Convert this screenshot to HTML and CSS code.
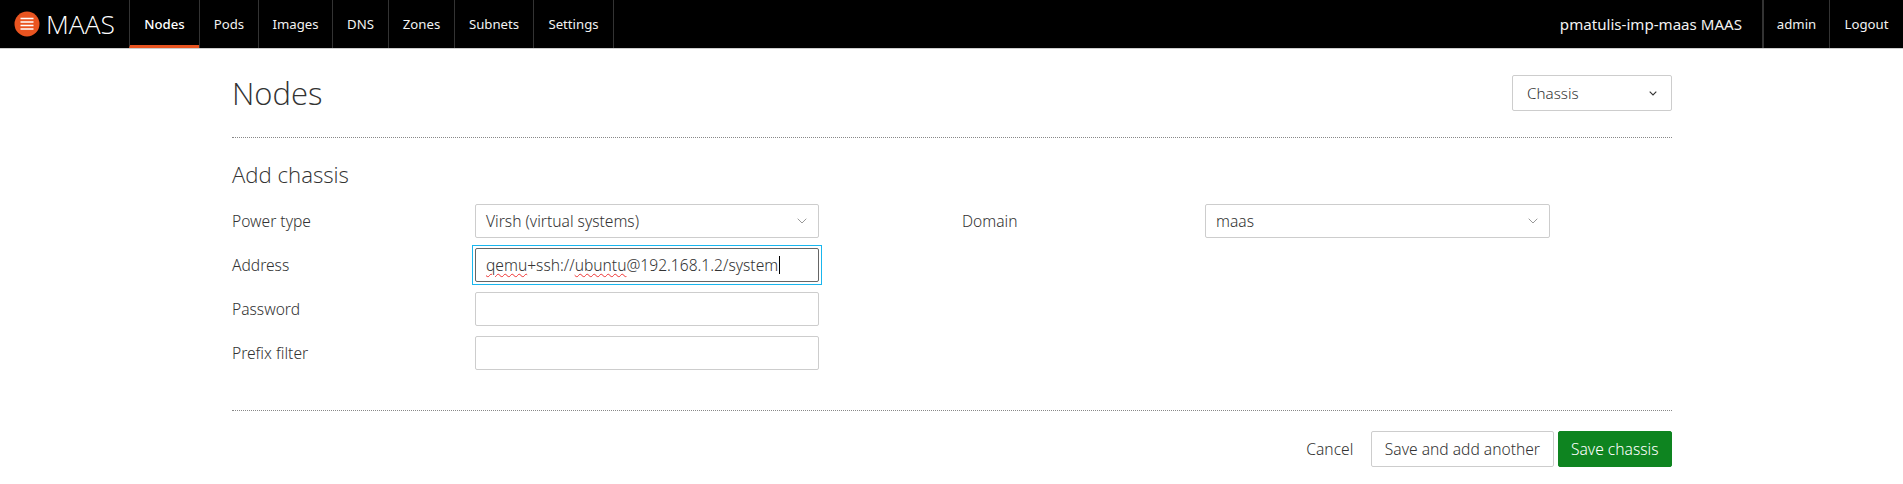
FILE: index.html
```html
<!DOCTYPE html>
<html lang="en">
<head>
<meta charset="utf-8">
<title>Nodes | MAAS</title>
<link rel="stylesheet" href="styles.css">
</head>
<body>
<header class="nav">
  <a class="brand">
    <svg class="logo" viewBox="0 0 26 26" width="26" height="26" aria-hidden="true">
      <circle cx="13" cy="13" r="12.5" fill="#e95420"/>
      <path d="M6.5 7.5h13M6.5 11h13M6.5 14.5h13M6.5 18h13" stroke="#fff" stroke-width="1.7" fill="none"/>
    </svg>
    <span class="brand-name">MAAS</span>
  </a>
  <nav class="tabs">
    <a class="tab tab-active">Nodes</a>
    <a class="tab">Pods</a>
    <a class="tab">Images</a>
    <a class="tab">DNS</a>
    <a class="tab">Zones</a>
    <a class="tab">Subnets</a>
    <a class="tab">Settings</a>
  </nav>
  <div class="nav-right">
    <span class="site">pmatulis-imp-maas MAAS</span>
    <a class="tab tab-user">admin</a>
    <a class="tab tab-logout">Logout</a>
  </div>
</header>
<main class="page">
  <div class="title-row">
    <h1 class="title">Nodes</h1>
    <div class="select select-add">Chassis<svg class="chev chev-dark" viewBox="0 0 8 5" width="8" height="5"><path d="M.7.7 4 4l3.3-3.3" fill="none" stroke="#333" stroke-width="1.1"/></svg></div>
  </div>
  <section class="panel">
    <h2 class="subtitle">Add chassis</h2>
    <div class="form">
      <div class="col col-left">
        <div class="row"><label class="label">Power type</label>
          <div class="select field">Virsh (virtual systems)<svg class="chev" viewBox="0 0 10 6" width="10" height="6"><path d="M.7.7 5 5 9.3.7" fill="none" stroke="#999" stroke-width="1"/></svg></div></div>
        <div class="row"><label class="label">Address</label>
          <div class="focus-ring"><div class="input input-focus"><span class="misspelt">qemu</span>+ssh://<span class="misspelt">ubuntu</span>@192.168.1.2/system<span class="caret"></span></div></div></div>
        <div class="row"><label class="label">Password</label><div class="input field"></div></div>
        <div class="row"><label class="label">Prefix filter</label><div class="input field"></div></div>
      </div>
      <div class="col col-right">
        <div class="row"><label class="label">Domain</label>
          <div class="select field field-domain">maas<svg class="chev" viewBox="0 0 10 6" width="10" height="6"><path d="M.7.7 5 5 9.3.7" fill="none" stroke="#999" stroke-width="1"/></svg></div></div>
      </div>
    </div>
    <div class="actions">
      <a class="cancel">Cancel</a>
      <button class="btn">Save and add another</button>
      <button class="btn btn-go">Save chassis</button>
    </div>
  </section>
</main>
</body>
</html>
```
FILE: styles.css
```css
* { box-sizing: border-box; }
html, body { margin: 0; padding: 0; }
body {
  background: #fff;
  color: #333;
  font-family: "Noto Sans", "Open Sans", sans-serif;
  font-size: 15.6px;
  font-weight: 300;
  line-height: 20px;
}
.nav {
  display: flex;
  align-items: stretch;
  height: 49px;
  background: #000;
  border-bottom: 1px solid #cdcdcd;
  color: #fff;
}
.brand {
  display: flex;
  align-items: center;
  width: 129px;
  padding-left: 14px;
}
.logo { flex: none; }
.brand-name {
  margin-left: 6px;
  font-size: 26.4px;
  font-weight: 300;
  font-family: "Open Sans", sans-serif;
}
.tabs { display: flex; }
.tab {
  display: flex;
  align-items: center;
  justify-content: center;
  font-size: 13.2px;
  font-weight: 400;
  border-left: 1px solid #333;
  color: #f2f2f2;
}
.tabs .tab:nth-child(1) { width: 70px; }
.tabs .tab:nth-child(2) { width: 59px; }
.tabs .tab:nth-child(3) { width: 74px; }
.tabs .tab:nth-child(4) { width: 56px; }
.tabs .tab:nth-child(5) { width: 66px; }
.tabs .tab:nth-child(6) { width: 79px; }
.tabs .tab:nth-child(7) { width: 81px; border-right: 1px solid #333; }
.tab-active { font-weight: 500; color: #fff; border-bottom: 3px solid #e95420; padding-top: 3px; }
.nav-right { display: flex; margin-left: auto; }
.site { display: flex; align-items: center; font-size: 15.1px; font-weight: 400; margin-right: 20px; color: #f2f2f2; }
.tab-user { width: 67px; border-left-width: 2px; }
.tab-logout { width: 74px; }
.page { width: 1440px; margin-left: 232px; }
.title-row {
  display: flex;
  justify-content: space-between;
  align-items: flex-start;
  height: 89px;
  padding-top: 25px;
  border-bottom: 1px dotted #888;
}
.title { margin: 0; font-size: 31px; line-height: 38px; font-weight: 300; font-family: "Open Sans", sans-serif; }
.select, .input {
  display: flex;
  align-items: center;
  height: 34px;
  padding: 0 10px 1px;
  background: #fff;
  border: 1px solid #cdcdcd;
  border-radius: 2px;
  font-size: 15.6px;
}
.select { justify-content: space-between; padding-right: 11px; }
.chev { margin-top: 1px; }
.select-add { width: 160px; height: 36px; padding: 0 14px; font-size: 15.2px; margin-top: 1px; }
.panel { padding-top: 25px; }
.subtitle { margin: 0 0 17px; font-size: 22.2px; line-height: 24px; font-weight: 300; font-family: "Open Sans", sans-serif; }
.form { display: flex; height: 207px; border-bottom: 1px dotted #888; }
.col-left { width: 730px; }
.row { display: flex; align-items: center; height: 34px; margin-bottom: 10px; }
.label { width: 243px; flex: none; padding-bottom: 1px; }
.field { width: 344px; }
.field-domain { width: 345px; }
.focus-ring { width: 344px; height: 34px; outline: 1px solid #19b6ee; outline-offset: 2px; }
.input-focus { border-color: #666; width: 100%; white-space: pre; }
.misspelt { text-decoration: underline wavy #e33; text-decoration-thickness: 1px; text-underline-offset: 2px; }
.caret { display: inline-block; width: 1px; height: 18px; background: #000; margin-left: 1px; }
.actions {
  display: flex;
  justify-content: flex-end;
  align-items: center;
  gap: 4px;
  padding-top: 20px;
}
.cancel { margin-right: 14px; }
.btn {
  height: 36px;
  padding: 0 12.5px;
  font: inherit;
  color: #333;
  background: #fff;
  border: 1px solid #cdcdcd;
  border-radius: 2px;
}
.btn-go { background: #0e8420; border-color: #0e8420; color: #fff; }
```
